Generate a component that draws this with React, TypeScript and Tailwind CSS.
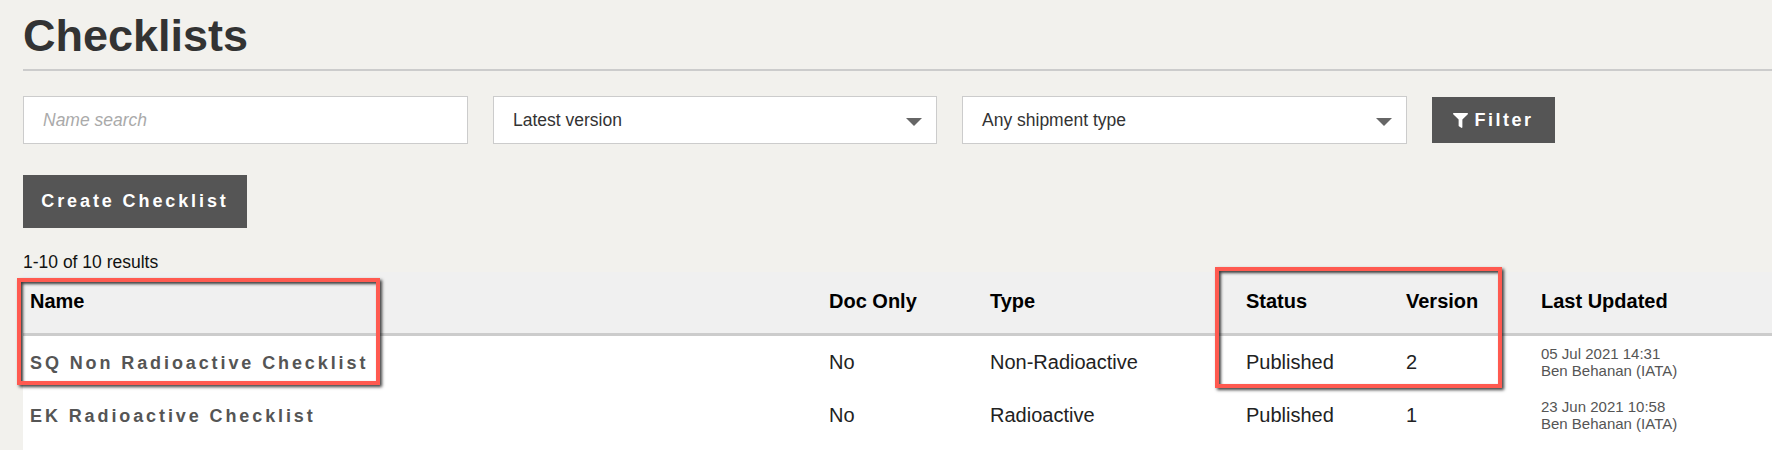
import { FaFilter } from "react-icons/fa";

const rows = [
  { name: "SQ Non Radioactive Checklist", docOnly: "No", type: "Non-Radioactive", status: "Published", version: "2", date: "05 Jul 2021 14:31", by: "Ben Behanan (IATA)" },
  { name: "EK Radioactive Checklist", docOnly: "No", type: "Radioactive", status: "Published", version: "1", date: "23 Jun 2021 10:58", by: "Ben Behanan (IATA)" },
];

function Dropdown({ label, width }: { label: string; width: string }) {
  return (
    <div className={`flex items-center justify-between ${width} h-[48px] bg-white border border-[#cccccc] pl-[19px] pr-[14px] text-[17.5px] text-[#333333]`}>
      <span>{label}</span>
      <span className="w-0 h-0 mt-[3px] border-x-[8px] border-x-transparent border-t-[8px] border-t-[#666666]" />
    </div>
  );
}

export default function App() {
  return (
    <div className="relative h-[450px] w-full overflow-hidden bg-[#f2f1ed] pl-[23px] font-['Liberation_Sans',Arial,sans-serif]">
      <h1 className="h-[71px] border-b-2 border-[#cccccc] pt-[11px] text-[45px] leading-[50px] font-bold text-[#333333]">Checklists</h1>

      {/* Filters */}
      <div className="mt-[25px] flex items-center gap-[25px]">
        <input
          placeholder="Name search"
          className="w-[445px] h-[48px] bg-white border border-[#cccccc] pl-[19px] text-[17.5px] italic outline-none placeholder:text-[#aaaaaa]"
        />
        <Dropdown label="Latest version" width="w-[444px]" />
        <Dropdown label="Any shipment type" width="w-[445px]" />
        <button className="flex items-center justify-center gap-[6px] w-[123px] h-[46px] bg-[#555555] text-white text-[18px] font-bold tracking-[2.5px]">
          <FaFilter className="w-[15px] h-[15px]" />
          Filter
        </button>
      </div>

      <button className="block mt-[31px] w-[224px] h-[53px] bg-[#555555] text-white text-[18px] font-bold tracking-[2.9px]">Create Checklist</button>

      <p className="mt-[24px] h-[20px] text-[17.5px] leading-[20px] text-[#111111]">1-10 of 10 results</p>

      {/* Table */}
      <div className="h-[178px] bg-white">
        <table className="w-full table-fixed border-collapse text-left text-[20px] text-[#222222]">
          <colgroup>
            <col className="w-[799px]" />
            <col className="w-[161px]" />
            <col className="w-[256px]" />
            <col className="w-[160px]" />
            <col className="w-[135px]" />
            <col />
          </colgroup>
          <thead>
            <tr className="h-[62px] bg-[#f0f0f0] border-b-[3px] border-[#cccccc] text-black">
              {["Name", "Doc Only", "Type", "Status", "Version", "Last Updated"].map((h) => (
                <th key={h} className="pl-[7px] pb-[3px] font-bold">{h}</th>
              ))}
            </tr>
          </thead>
          <tbody>
            {rows.map((r) => (
              <tr key={r.name} className="h-[54px]">
                <td className="pl-[7px] pt-[3px] text-[18px] font-bold tracking-[2.9px] text-[#555555]">{r.name}</td>
                <td className="pl-[7px]">{r.docOnly}</td>
                <td className="pl-[7px]">{r.type}</td>
                <td className="pl-[7px]">{r.status}</td>
                <td className="pl-[7px]">{r.version}</td>
                <td className="pl-[7px] text-[15px] leading-[17px] text-[#555555]">
                  <div>{r.date}</div>
                  <div>{r.by}</div>
                </td>
              </tr>
            ))}
          </tbody>
        </table>
      </div>

      {/* Annotation boxes */}
      <div className="absolute left-[17px] top-[278px] w-[363px] h-[107px] border-[4px] border-[#ff5a50] shadow-[2px_2px_3px_rgba(0,0,0,0.75),inset_2px_2px_3px_rgba(0,0,0,0.75)]" />
      <div className="absolute left-[1215px] top-[267px] w-[287px] h-[121px] border-[4px] border-[#ff5a50] shadow-[2px_2px_3px_rgba(0,0,0,0.75),inset_2px_2px_3px_rgba(0,0,0,0.75)]" />
    </div>
  );
}
